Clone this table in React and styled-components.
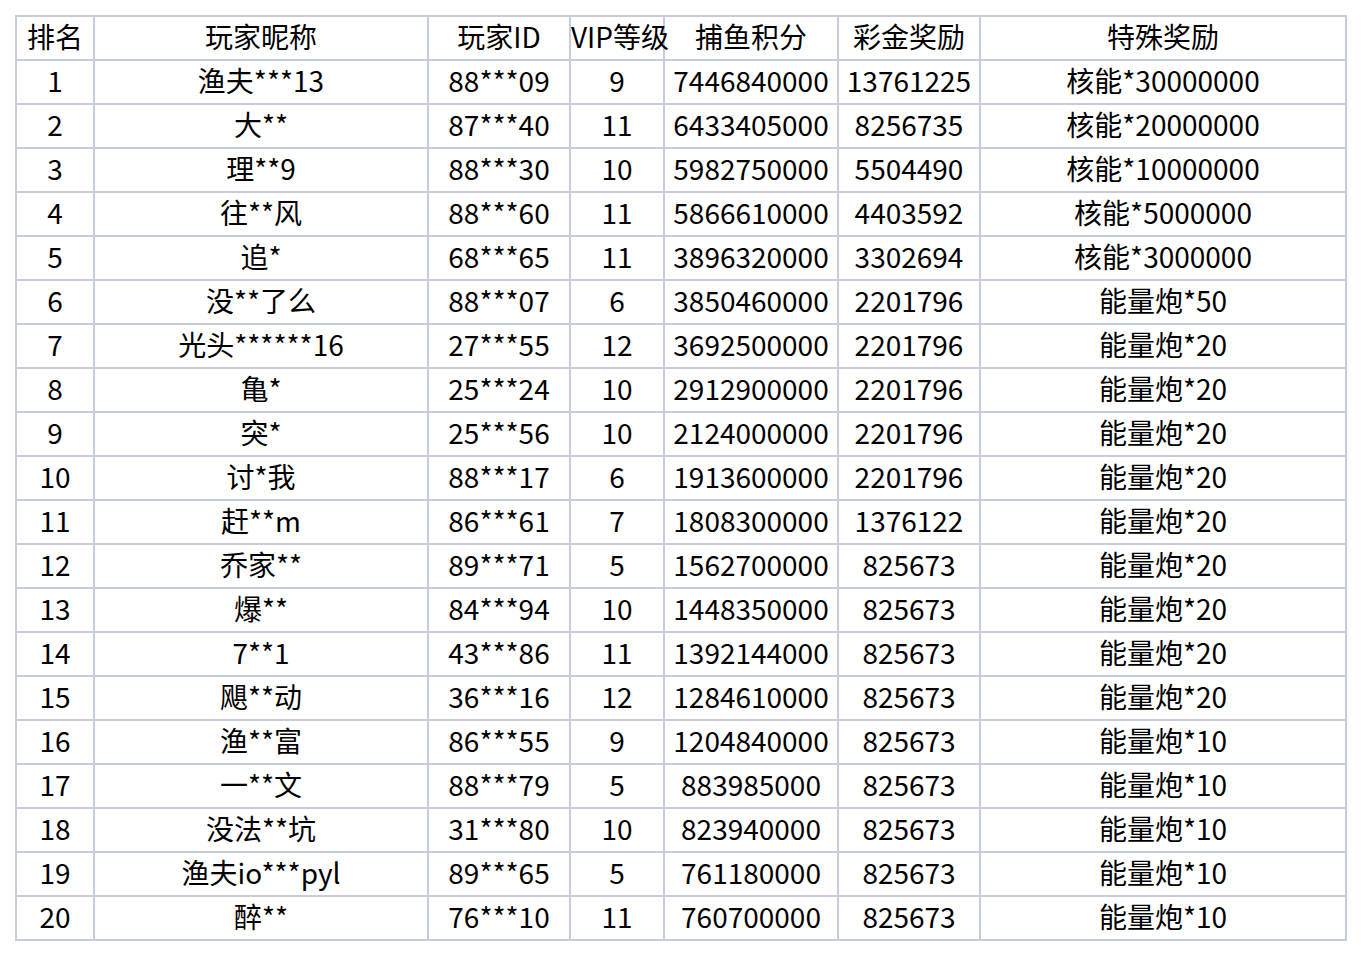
import React from 'react';
import styled, { createGlobalStyle } from 'styled-components';

const GlobalStyle = createGlobalStyle`
  html, body {
    margin: 0;
    padding: 0;
    background: #ffffff;
  }
  body {
    font-family: "Noto Sans CJK SC", "Noto Sans", sans-serif;
  }
`;

const headers = ['排名', '玩家昵称', '玩家ID', 'VIP等级', '捕鱼积分', '彩金奖励', '特殊奖励'];

const rows = [
  ['1', '渔夫***13', '88***09', '9', '7446840000', '13761225', '核能*30000000'],
  ['2', '大**', '87***40', '11', '6433405000', '8256735', '核能*20000000'],
  ['3', '理**9', '88***30', '10', '5982750000', '5504490', '核能*10000000'],
  ['4', '往**风', '88***60', '11', '5866610000', '4403592', '核能*5000000'],
  ['5', '追*', '68***65', '11', '3896320000', '3302694', '核能*3000000'],
  ['6', '没**了么', '88***07', '6', '3850460000', '2201796', '能量炮*50'],
  ['7', '光头******16', '27***55', '12', '3692500000', '2201796', '能量炮*20'],
  ['8', '亀*', '25***24', '10', '2912900000', '2201796', '能量炮*20'],
  ['9', '突*', '25***56', '10', '2124000000', '2201796', '能量炮*20'],
  ['10', '讨*我', '88***17', '6', '1913600000', '2201796', '能量炮*20'],
  ['11', '赶**m', '86***61', '7', '1808300000', '1376122', '能量炮*20'],
  ['12', '乔家**', '89***71', '5', '1562700000', '825673', '能量炮*20'],
  ['13', '爆**', '84***94', '10', '1448350000', '825673', '能量炮*20'],
  ['14', '7**1', '43***86', '11', '1392144000', '825673', '能量炮*20'],
  ['15', '飓**动', '36***16', '12', '1284610000', '825673', '能量炮*20'],
  ['16', '渔**富', '86***55', '9', '1204840000', '825673', '能量炮*10'],
  ['17', '一**文', '88***79', '5', '883985000', '825673', '能量炮*10'],
  ['18', '没法**坑', '31***80', '10', '823940000', '825673', '能量炮*10'],
  ['19', '渔夫io***pyl', '89***65', '5', '761180000', '825673', '能量炮*10'],
  ['20', '醉**', '76***10', '11', '760700000', '825673', '能量炮*10'],
];

const Page = styled.div`
  padding: 15px 0 0 15px;
`;

const Grid = styled.div`
  display: inline-grid;
  grid-template-columns: 76px 332px 140px 92px 172px 140px 364px;
  grid-auto-rows: 42px;
  gap: 2px;
  padding: 2px;
  background: #c6ccdd;
`;

const Cell = styled.div`
  background: #ffffff;
  color: #000000;
  font-size: 28px;
  line-height: 38px;
  padding-bottom: 4px;
  text-align: center;
  white-space: nowrap;
  overflow: visible;
  position: relative;
  z-index: ${(p) => (p.$over ? 1 : 0)};
`;

export default function App() {
  return (
    <>
      <GlobalStyle />
      <Page>
        <Grid>
          {headers.map((h) => (
            <Cell key={h} $over={h === 'VIP等级'}>{h}</Cell>
          ))}
          {rows.map((r) =>
            r.map((v, i) => <Cell key={r[0] + '-' + i}>{v}</Cell>)
          )}
        </Grid>
      </Page>
    </>
  );
}
